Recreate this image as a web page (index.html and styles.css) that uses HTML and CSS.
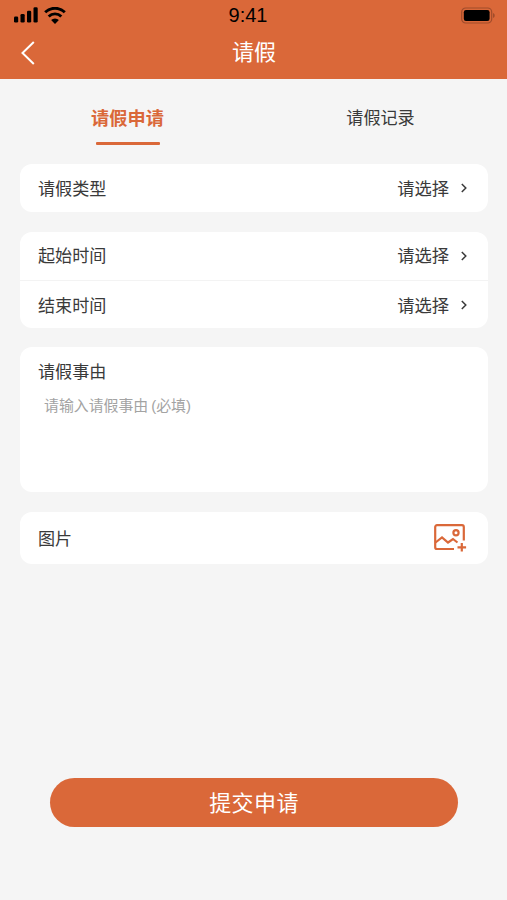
FILE: index.html
```html
<!DOCTYPE html>
<html lang="zh-CN">
<head>
    <meta charset="UTF-8">
    <meta name="viewport" content="width=device-width, initial-scale=1.0">
    <title>请假</title>
    <link rel="stylesheet" href="styles.css">
</head>
<body>
    <div class="page">
        <header class="header">
            <!-- 状态栏 -->
            <div class="status-bar">
                <div class="status-left">
                    <svg class="signal" width="24" height="16" viewBox="0 0 24 16">
                        <rect x="0" y="9.5" width="4.2" height="6" rx="1.3"/>
                        <rect x="6.5" y="7" width="4.2" height="8.5" rx="1.3"/>
                        <rect x="13" y="3.8" width="4.2" height="11.7" rx="1.3"/>
                        <rect x="19.5" y="0.3" width="4.2" height="15.2" rx="1.3"/>
                    </svg>
                    <svg class="wifi" width="22" height="17" viewBox="0 0 22 17">
                        <path d="M1.2 5.300a13.900 13.900 0 0 1 19.600 0M4.700 9.500a8.900 8.900 0 0 1 12.600 0" fill="none" stroke="#000" stroke-width="2.900"/>
                        <path d="M11 17l-3.900-4a5.500 5.500 0 0 1 7.800 0z"/>
                    </svg>
                </div>
                <span class="time">9:41</span>
                <svg class="battery" width="34" height="17" viewBox="0 0 34 17">
                    <rect x="0.7" y="1" width="30" height="15" rx="4" fill="none" stroke="#a04c2b" stroke-width="1.2"/>
                    <rect x="2.8" y="3" width="25.8" height="11" rx="2.2"/>
                    <path d="M32 6v5c2.3-1 2.3-4 0-5z" fill="#a04c2b"/>
                </svg>
            </div>
            <div class="nav-bar">
                <svg class="back" width="14" height="24" viewBox="0 0 14 24">
                    <path d="M12.8 1L1.500 12l11.300 11" fill="none" stroke="#fff" stroke-width="2"/>
                </svg>
                <h1 class="title">请假</h1>
            </div>
        </header>

        <ul class="tabs">
            <li class="tab active">请假申请</li>
            <li class="tab">请假记录</li>
        </ul>

        <main class="form">
            <div class="card">
                <div class="row">
                    <span class="label">请假类型</span>
                    <div class="select">
                        <span class="label">请选择</span>
                        <svg class="arrow" width="6" height="10" viewBox="0 0 6 10"><path d="M0.8 1l4 4-4 4"/></svg>
                    </div>
                </div>
            </div>

            <div class="card">
                <div class="row">
                    <span class="label">起始时间</span>
                    <div class="select">
                        <span class="label">请选择</span>
                        <svg class="arrow" width="6" height="10" viewBox="0 0 6 10"><path d="M0.8 1l4 4-4 4"/></svg>
                    </div>
                </div>
                <div class="row">
                    <span class="label">结束时间</span>
                    <div class="select">
                        <span class="label">请选择</span>
                        <svg class="arrow" width="6" height="10" viewBox="0 0 6 10"><path d="M0.8 1l4 4-4 4"/></svg>
                    </div>
                </div>
            </div>

            <div class="card reason">
                <p class="reason-title">请假事由</p>
                <p class="placeholder">请输入请假事由<span class="required">(必填)</span></p>
            </div>

            <div class="card">
                <div class="row picture">
                    <span>图片</span>
                    <svg class="add-picture" width="33" height="28" viewBox="0 0 33 28">
                        <path d="M20 25H3a1.8 1.8 0 0 1-1.8-1.8V3A1.8 1.8 0 0 1 3 1.2h25A1.8 1.8 0 0 1 29.8 3v13.5"/>
                        <path d="M1.5 18.500l6.500-5 6 5 5-3.500 4.500 3.500"/>
                        <circle cx="22" cy="8.700" r="2.600"/>
                        <path d="M27.800 19v8.500M23.500 23.300h8.600"/>
                    </svg>
                </div>
            </div>
        </main>

        <button class="submit">提交申请</button>
    </div>
</body>
</html>
```

FILE: styles.css
```css
*{
    box-sizing: border-box;
}

body, h1, p, ul{
    margin: 0;
    padding: 0;
}

body{
    font-family: "Liberation Sans", "Noto Sans CJK SC", sans-serif;
    font-size: 17.1px;
    color: #3a3a3a;
    background-color: #f5f5f5;
}

.page{
    display: flex;
    flex-direction: column;
    height: 900px;
}

/* 顶部 */
.header{
    height: 79px;
    background-color: #da6839;
}

.status-bar{
    display: grid;
    grid-template-columns: 1fr auto 1fr;
    align-items: center;
    height: 30px;
    padding: 0 12px 0 14px;
}

.status-left{
    display: flex;
    align-items: center;
    gap: 6px;
}

.time{
    margin-right: 13px;
    font-size: 20px;
    line-height: 30px;
    color: #000;
}

.battery{
    justify-self: end;
}

.nav-bar{
    display: grid;
    grid-template-columns: 14px 1fr 14px;
    align-items: center;
    height: 45px;
    padding: 0 20px 0 21px;
}

.title{
    padding-top: 1px;
    font-size: 22px;
    font-weight: 400;
    line-height: 44px;
    text-align: center;
    color: #fff;
}

/* 选项卡 */
.tabs{
    display: flex;
    height: 85px;
    padding-left: 1px;
    list-style: none;
}

.tab{
    display: flex;
    flex: 1;
    flex-direction: column;
    align-items: center;
    padding-top: 25px;
    line-height: 30px;
}

.tab.active{
    font-size: 18.2px;
    font-weight: 700;
    color: #da6839;
}

.tab.active::after{
    content: "";
    margin-top: 8px;
    width: 64px;
    height: 3px;
    border-radius: 1px;
    background-color: #da6839;
}

/* 表单 */
.form{
    display: flex;
    flex-direction: column;
    gap: 19.5px;
    padding: 0 19px 0 20px;
}

.card{
    border-radius: 12px;
    background-color: #fff;
}

.row{
    display: flex;
    align-items: center;
    justify-content: space-between;
    height: 48px;
    padding: 0 21px 0 18px;
}

.row + .row{
    border-top: 1px solid #f3f3f3;
    padding-top: 2px;
}

.label{
    padding-bottom: 2px;
}

.select{
    display: flex;
    align-items: center;
    gap: 12px;
    font-size: 17.3px;
}

.arrow{
    fill: none;
    stroke: #3a3a3a;
    stroke-width: 1.5;
}

.reason{
    height: 145px;
    padding: 13px 18px;
}

.reason-title{
    line-height: 26px;
}

.placeholder{
    margin-top: 8px;
    padding-left: 6px;
    font-size: 14.9px;
    line-height: 24px;
    color: #a3a3a3;
}

.required{
    margin-left: 3px;
}

.picture{
    height: 52px;
}

.add-picture{
    fill: none;
    stroke: #da6839;
    stroke-width: 2.2;
}

/* 提交按钮 */
.submit{
    margin: auto 49px 73px 50px;
    border: none;
    border-radius: 25px;
    padding-bottom: 5px;
    height: 49px;
    font-family: inherit;
    font-size: 22px;
    letter-spacing: 0.4px;
    color: #fff;
    background-color: #da6839;
}
```
